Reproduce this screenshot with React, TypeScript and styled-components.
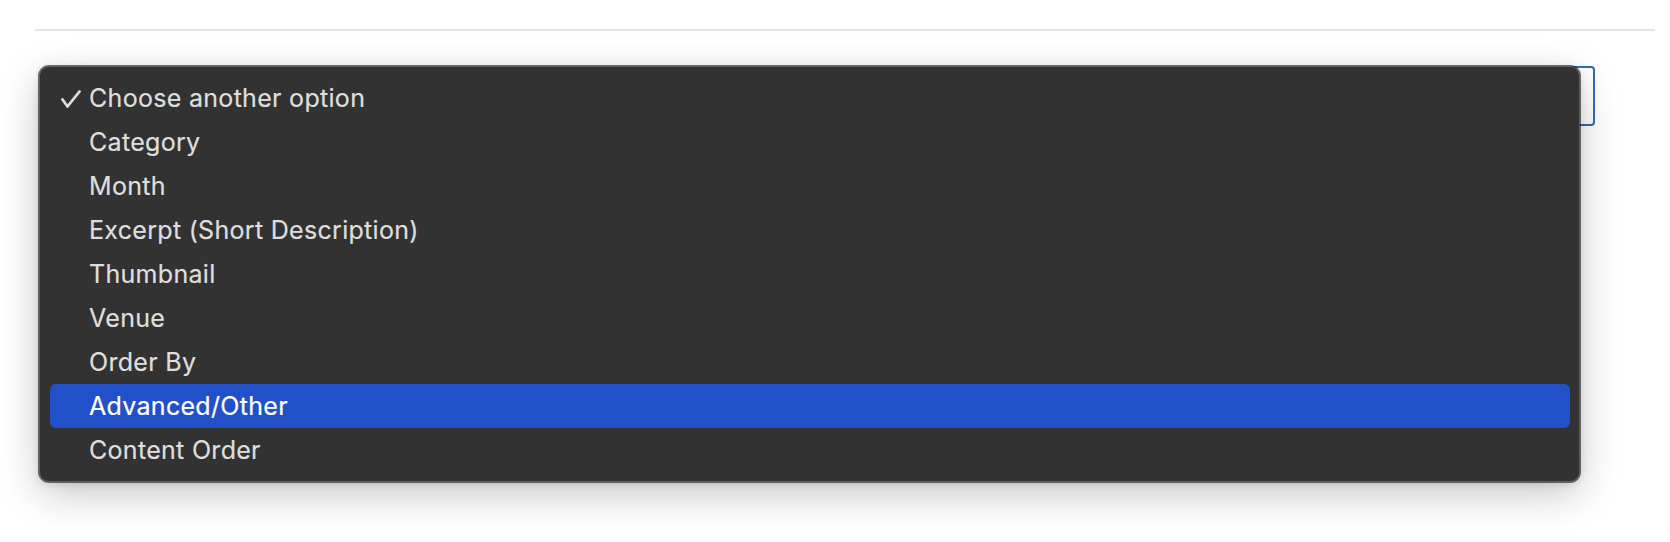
import { createGlobalStyle, styled } from 'styled-components';

const options = [
  'Choose another option',
  'Category',
  'Month',
  'Excerpt (Short Description)',
  'Thumbnail',
  'Venue',
  'Order By',
  'Advanced/Other',
  'Content Order',
];

const selectedIndex = 0;
const hoveredIndex = 7;

const GlobalStyle = createGlobalStyle`
  html, body, #root {
    margin: 0;
    padding: 0;
    min-height: 100%;
    background: #fff;
  }
  html, body {
    height: 100%;
  }
  body {
    font-family: Inter, "Noto Sans", "Liberation Sans", sans-serif;
  }
`;

const App = () => {
  return (
    <>
      <GlobalStyle />
      <Page>
        <Divider />
        <Field>
          <SelectBox />
          <Menu>
            {options.map((option, i) => (
              <Option key={option} $active={i === hoveredIndex}>
                {i === selectedIndex && (
                  <Check viewBox="0 0 20 18" aria-hidden="true">
                    <path d="M1.5 9.5 L6.5 16.5 L18.5 1.5" />
                  </Check>
                )}
                {option}
              </Option>
            ))}
          </Menu>
        </Field>
      </Page>
    </>
  );
};

export default App;

const Page = styled.div`
  box-sizing: border-box;
  min-height: 542px;
  padding: 29px 15px 0 35px;
`;

const Divider = styled.div`
  height: 2px;
  background: #e4e4e4;
  margin-bottom: 35px;
`;

const Field = styled.div`
  position: relative;
  width: 1556px;
  margin-left: 4px;
`;

// the closed select that the open menu covers; only its right end shows
const SelectBox = styled.div`
  box-sizing: border-box;
  height: 60px;
  margin-left: 12px;
  border: 2px solid #2f6db4;
  border-radius: 4px;
  background: #fff;
`;

const Menu = styled.div`
  position: absolute;
  top: 0;
  left: 0;
  z-index: 10;
  box-sizing: border-box;
  width: 1541px;
  padding: 9px 9px 9px 10px;
  background: #323232;
  border: 1px solid #5e5e5e;
  border-radius: 10px;
  box-shadow: 0 0 0 1px rgba(0, 0, 0, 0.55), 0 12px 40px rgba(0, 0, 0, 0.22),
    0 2px 8px rgba(0, 0, 0, 0.12);
`;

const Option = styled.div<{ $active: boolean }>`
  position: relative;
  height: 44px;
  display: flex;
  align-items: center;
  padding-left: 39px;
  border-radius: 6px;
  font-size: 25px;
  letter-spacing: 0.3px;
  color: ${p => (p.$active ? '#ffffff' : '#dedede')};
  background: ${p => (p.$active ? '#2150c9' : 'transparent')};
  -webkit-text-stroke: 0.2px currentColor;
`;

const Check = styled.svg`
  position: absolute;
  left: 11px;
  top: 14px;
  width: 20px;
  height: 18px;
  fill: none;
  stroke: #dedede;
  stroke-width: 2.8;
  stroke-linecap: round;
  stroke-linejoin: round;
`;
